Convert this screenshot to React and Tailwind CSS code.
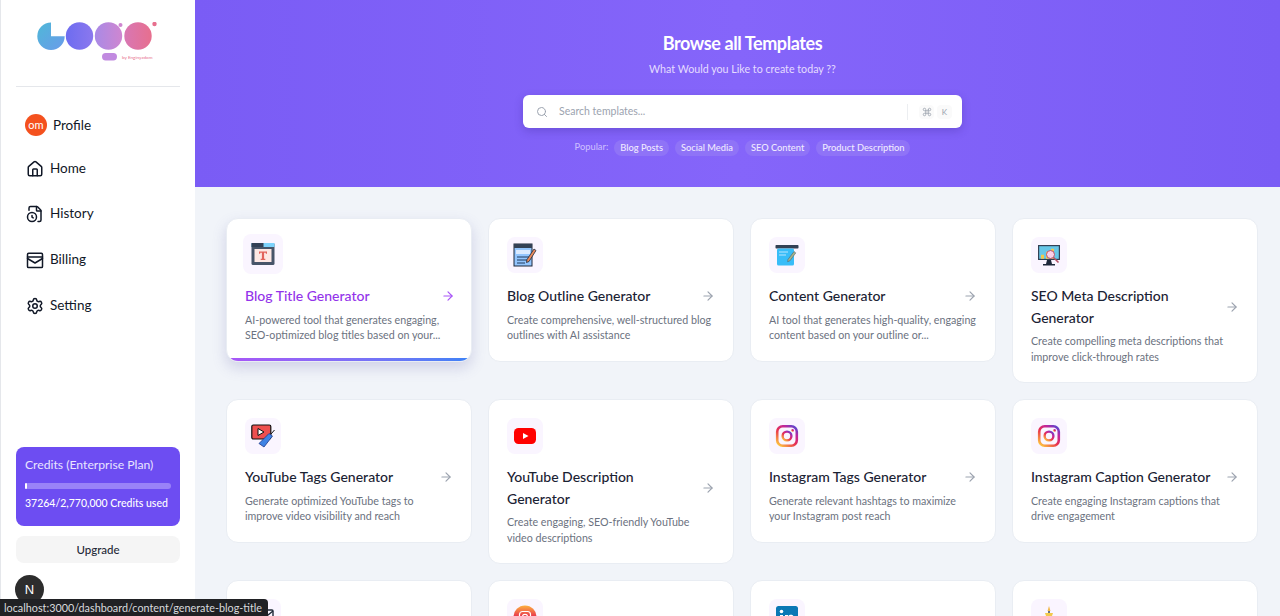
import { ArrowRight, Command, FileClock, House, Search, Settings } from "lucide-react";

const font = "font-['Lato','Liberation_Sans',sans-serif]";

function BlogTitleIcon() {
  return (
    <svg viewBox="0 0 24 24" className="w-6 h-6">
      <rect x="0.5" y="1" width="23" height="22" rx="1.5" fill="#475569" />
      <rect x="0.5" y="1" width="23" height="4" fill="#7dd3fc" />
      <rect x="0.5" y="1" width="12" height="4" fill="#334155" />
      <rect x="3.5" y="7" width="17" height="13" fill="#fde8e4" />
      <path d="M8 9.5h8v2.2h-1.2v-1h-1.7v6h1.2V18H9.7v-1.3h1.2v-6H9.2v1H8z" fill="#e2635b" />
    </svg>
  );
}

function BlogOutlineIcon() {
  return (
    <svg viewBox="0 0 24 24" className="w-6 h-6">
      <rect x="1" y="1" width="18" height="22" fill="#93c5fd" stroke="#1e293b" strokeWidth="1" />
      <rect x="1" y="1" width="18" height="4" fill="#334155" />
      <rect x="3" y="7" width="14" height="4" fill="#dbeafe" />
      <path d="M4 14h12M4 17h10M4 20h8" stroke="#1e3a5f" strokeWidth="1" />
      <path d="M21 6l2 1.5-7 11-2.5 1 .4-2.8z" fill="#ea8a5b" stroke="#1e293b" strokeWidth="0.8" />
    </svg>
  );
}

function ContentIcon() {
  return (
    <svg viewBox="0 0 24 24" className="w-6 h-6">
      <rect x="0.5" y="2" width="23" height="3.5" rx="0.8" fill="#334155" />
      <rect x="2" y="5.5" width="17" height="17" rx="1.5" fill="#38bdf8" />
      <path d="M4 9h9M4 12h7" stroke="#bae6fd" strokeWidth="1.2" />
      <path d="M19 8.5l1.8 1.4-6 8-2.2.8.4-2.3z" fill="#a3b18a" stroke="#475569" strokeWidth="0.5" />
    </svg>
  );
}

function SeoIcon() {
  return (
    <svg viewBox="0 0 24 24" className="w-6 h-6">
      <rect x="1" y="2" width="22" height="15" fill="#334155" />
      <rect x="2.2" y="3.2" width="19.6" height="12.6" fill="#67c7e8" />
      <path d="M4 15.8v-4h3v4zM9 15.8v-7h3v7zM14 15.8v-10h3v10z" fill="#f2c94c" />
      <path d="M10 17h4l1 4h3v1.5H6V21h3z" fill="#1e293b" />
      <circle cx="13.5" cy="11.5" r="4" fill="#fbcfe8" stroke="#b45368" strokeWidth="1" />
      <path d="M16.5 14.5l5 5" stroke="#b45368" strokeWidth="1.6" />
    </svg>
  );
}

function TagsIcon() {
  return (
    <svg viewBox="0 0 24 24" className="w-6 h-6">
      <rect x="0.8" y="1" width="19" height="14" rx="1.5" fill="#ee4f4f" stroke="#111" strokeWidth="1.2" />
      <path d="M7 4.5l6 3.5-6 3.5z" fill="#fff" stroke="#111" strokeWidth="1" />
      <path d="M18 9.5l3.5 2.5-8.5 11-5-3.5z" fill="#3f83e4" stroke="#1e3a8a" strokeWidth="0.8" />
      <path d="M20 10l3.5-4" stroke="#111" strokeWidth="1" />
    </svg>
  );
}

function YoutubeIcon() {
  return (
    <svg viewBox="0 0 24 24" className="w-6 h-6">
      <rect x="1" y="4" width="22" height="16" rx="4.5" fill="#f00" />
      <path d="M10 9l5.5 3-5.5 3z" fill="#fff" />
    </svg>
  );
}

function InstagramIcon({ id }) {
  return (
    <svg viewBox="0 0 24 24" className="w-6 h-6">
      <defs>
        <linearGradient id={id} x1="0.1" y1="1" x2="0.9" y2="0">
          <stop offset="0" stopColor="#fdc43f" />
          <stop offset="0.45" stopColor="#e8304f" />
          <stop offset="0.75" stopColor="#c0269c" />
          <stop offset="1" stopColor="#5a45cf" />
        </linearGradient>
      </defs>
      <rect x="2.2" y="2.2" width="19.6" height="19.6" rx="5.5" fill="none" stroke={`url(#${id})`} strokeWidth="2.6" />
      <circle cx="12" cy="12" r="4.4" fill="none" stroke={`url(#${id})`} strokeWidth="2.4" />
      <circle cx="17.6" cy="6.4" r="1.3" fill={`url(#${id})`} />
    </svg>
  );
}

function MailIcon() {
  return (
    <svg viewBox="0 0 24 24" className="w-6 h-6" fill="none" stroke="#1f2937" strokeWidth="1.4">
      <rect x="2" y="5" width="20" height="14" rx="1" />
      <path d="M2 6l10 8 10-8" />
    </svg>
  );
}

function InstaFilledIcon() {
  return (
    <svg viewBox="0 0 24 24" className="w-6 h-6">
      <defs>
        <linearGradient id="insta-fill" x1="0" y1="0" x2="0" y2="1">
          <stop offset="0" stopColor="#fdb13f" />
          <stop offset="0.5" stopColor="#e8304f" />
          <stop offset="1" stopColor="#b026b5" />
        </linearGradient>
      </defs>
      <circle cx="12" cy="12" r="11.5" fill="url(#insta-fill)" />
      <rect x="6.5" y="6.5" width="11" height="11" rx="3" fill="none" stroke="#fff" strokeWidth="1.2" />
      <circle cx="12" cy="12" r="2.6" fill="none" stroke="#fff" strokeWidth="1.2" />
    </svg>
  );
}

function LinkedinIcon() {
  return (
    <svg viewBox="0 0 24 24" className="w-6 h-6">
      <rect x="1" y="1" width="22" height="22" rx="2.5" fill="#0a78b5" />
      <path d="M5 10h3v9H5zM10 10h3v1.3c.6-.9 1.6-1.5 2.9-1.5 2.3 0 3.1 1.5 3.1 3.8V19h-3v-4.7c0-1.2-.4-2-1.4-2s-1.6.8-1.6 2V19h-3z" fill="#fff" />
      <circle cx="6.5" cy="6.5" r="1.8" fill="#fff" />
    </svg>
  );
}

function TrophyIcon() {
  return (
    <svg viewBox="0 0 24 24" className="w-6 h-6">
      <path d="M12 1l1.5 5h-3z" fill="#f2b84b" />
      <rect x="11" y="6" width="2" height="10" fill="#64748b" />
      <path d="M8 8h8l-1 3H9z" fill="#f2c94c" />
      <rect x="5" y="16" width="14" height="3" fill="#475569" />
      <rect x="3" y="19" width="18" height="3" fill="#94a3b8" />
    </svg>
  );
}

function BillingIcon() {
  return (
    <svg viewBox="0 0 24 24" className="w-[18px] h-[18px]" fill="none" stroke="#111827" strokeWidth="2" strokeLinejoin="round" strokeLinecap="round">
      <rect x="2" y="3" width="20" height="19" rx="1.5" />
      <path d="M2 8h20" />
      <path d="M2 10l10 6 10-6" />
    </svg>
  );
}

function Logo() {
  return (
    <svg viewBox="0 0 122 42" className="w-[122px] h-[42px]">
      <defs>
        <linearGradient id="logo-a" x1="0" y1="0" x2="1" y2="1">
          <stop offset="0" stopColor="#4fb8d8" />
          <stop offset="1" stopColor="#6a9bea" />
        </linearGradient>
        <linearGradient id="logo-b" x1="0" y1="0" x2="1" y2="0">
          <stop offset="0" stopColor="#6d6cf0" />
          <stop offset="1" stopColor="#8b78ee" />
        </linearGradient>
        <linearGradient id="logo-c" x1="0" y1="0" x2="1" y2="0">
          <stop offset="0" stopColor="#a98ae6" />
          <stop offset="1" stopColor="#cf86d0" />
        </linearGradient>
        <linearGradient id="logo-d" x1="0" y1="0" x2="1" y2="0">
          <stop offset="0" stopColor="#d877b4" />
          <stop offset="1" stopColor="#e76f8e" />
        </linearGradient>
      </defs>
      <path d="M14 0.5 A13.7 13.7 0 1 0 27.7 14.2 H14 Z" fill="url(#logo-a)" />
      <circle cx="42.5" cy="14" r="13.7" fill="url(#logo-b)" />
      <circle cx="71.5" cy="14" r="13.7" fill="url(#logo-c)" />
      <circle cx="83.5" cy="3" r="2" fill="#cf86d0" />
      <circle cx="101" cy="14" r="13.7" fill="url(#logo-d)" />
      <circle cx="117.5" cy="2" r="2.2" fill="#e76f8e" />
      <rect x="65" y="31" width="15" height="7.5" rx="3.7" fill="#c18ae0" />
      <text x="85" y="36.5" fontSize="4.6" fill="#e76f8e">by Enginyzdom</text>
    </svg>
  );
}

const NAV = [
  { label: "Home", icon: <House size={18} strokeWidth={2} color="#111827" />, cls: "h-[45px]" },
  { label: "History", icon: <FileClock size={18} strokeWidth={2} color="#111827" />, cls: "h-[45px]" },
  { label: "Billing", icon: <BillingIcon />, cls: "h-[47px]" },
  { label: "Setting", icon: <Settings size={18} strokeWidth={2} color="#111827" />, cls: "h-[45px]" },
];

const CARDS = [
  { title: "Blog Title Generator", desc: "AI-powered tool that generates engaging, SEO-optimized blog titles based on your...", icon: <BlogTitleIcon />, active: true },
  { title: "Blog Outline Generator", desc: "Create comprehensive, well-structured blog outlines with AI assistance", icon: <BlogOutlineIcon /> },
  { title: "Content Generator", desc: "AI tool that generates high-quality, engaging content based on your outline or...", icon: <ContentIcon /> },
  { title: "SEO Meta Description Generator", desc: "Create compelling meta descriptions that improve click-through rates", icon: <SeoIcon /> },
  { title: "YouTube Tags Generator", desc: "Generate optimized YouTube tags to improve video visibility and reach", icon: <TagsIcon /> },
  { title: "YouTube Description Generator", desc: "Create engaging, SEO-friendly YouTube video descriptions", icon: <YoutubeIcon /> },
  { title: "Instagram Tags Generator", desc: "Generate relevant hashtags to maximize your Instagram post reach", icon: <InstagramIcon id="insta-a" /> },
  { title: "Instagram Caption Generator", desc: "Create engaging Instagram captions that drive engagement", icon: <InstagramIcon id="insta-b" /> },
  { icon: <MailIcon /> },
  { icon: <InstaFilledIcon /> },
  { icon: <LinkedinIcon /> },
  { icon: <TrophyIcon /> },
];

function Card({ title, desc, icon, active }) {
  return (
    <div className={`relative self-start min-h-[143px] w-full overflow-hidden rounded-xl border border-[#e9edf3] bg-white p-[18px] ${active ? "shadow-[0_6px_14px_rgba(90,90,170,0.22)]" : ""}`}>
      <div className={`flex items-center justify-center bg-[#faf5ff] rounded-lg ${active ? "w-10 h-10 -ml-[2px] -mt-[3px] -mb-[1px]" : "w-9 h-9"}`}>
        {icon}
      </div>
      {title && (
        <>
          <div className="mt-3 flex items-center justify-between gap-2">
            <h3 className={`text-[14px] leading-[21.5px] font-medium ${active ? "text-[#9333ea]" : "text-[#1a2233]"}`}>{title}</h3>
            <ArrowRight size={14} className={`shrink-0 ${active ? "-mr-[2px] text-[#a855f7]" : "text-[#9ca3af]"}`} />
          </div>
          <p className="mt-[5px] text-[10.7px] leading-[15.5px] text-[#6b7280]">{desc}</p>
        </>
      )}
      {active && <div className="absolute left-0 right-0 bottom-0 h-[3px] bg-gradient-to-r from-[#a855f7] to-[#3b82f6]" />}
    </div>
  );
}

export default function App() {
  return (
    <div className={`relative flex h-[616px] w-[1280px] overflow-hidden bg-[#f1f4f9] ${font}`}>
      <aside className="flex w-[195px] shrink-0 flex-col border-l border-[#e5e7eb] bg-white pl-[15px] pr-[15px]">
        <div className="flex h-[87px] items-start justify-center border-b border-[#e5e7eb] pt-[22px]">
          <Logo />
        </div>
        <div className="mt-[26px] flex h-[24px] items-center gap-[6px] pl-[9px] text-[13.5px] text-[#111827]">
          <span className="flex h-[22px] w-[22px] items-center justify-center rounded-full bg-[#f4511e] text-[11px] text-white">om</span>
          Profile
        </div>
        <nav className="mt-[9px] flex flex-col">
          {NAV.map((n) => (
            <div key={n.label} className={`flex items-center gap-[6px] pl-[10px] text-[13.5px] text-[#111827] ${n.cls}`}>
              {n.icon}
              {n.label}
            </div>
          ))}
        </nav>
        <div className="mt-auto h-[79px] rounded-lg bg-[#6d4df2] px-[9px] pt-[10px] text-white">
          <p className="whitespace-nowrap text-[12.2px] leading-[16px] text-[#e9e4ff]">Credits (Enterprise Plan)</p>
          <div className="mt-[10px] h-[6px] rounded-full bg-[#9a82f8]">
            <div className="h-full w-[2px] rounded-full bg-white" />
          </div>
          <p className="mt-[6px] whitespace-nowrap text-[10.5px] leading-[16px] font-medium">37264/2,770,000 Credits used</p>
        </div>
        <button className="mb-[53px] mt-[10px] h-[27px] rounded-lg bg-[#f5f5f5] text-[11.5px] font-medium text-[#1f2937]">Upgrade</button>
      </aside>

      <main className="min-w-0 flex-1">
        <header className="flex h-[187px] flex-col items-center bg-gradient-to-r from-[#7a5cf5] via-[#8565fa] to-[#7a5cf5] pl-[10px] pt-[32px]">
          <h1 className="text-[18px] leading-[22px] font-bold tracking-[-0.4px] text-white">Browse all Templates</h1>
          <p className="mt-[7px] text-[10.7px] leading-[16px] text-[#e4dcff]">What Would you Like to create today ??</p>
          <div className="mt-[18px] flex h-[33px] w-[439px] items-center rounded-md bg-white pl-[13px] pr-[10px] shadow-[0_3px_8px_rgba(60,40,150,0.3)]">
            <Search size={12} className="text-[#9ca3af]" />
            <span className="ml-[11px] flex-1 text-[10.5px] text-[#9ca3af]">Search templates...</span>
            <div className="flex h-[16px] items-center gap-[3px] border-l border-[#eceef1] pl-[11px]">
              <span className="flex h-[14px] w-[15px] items-center justify-center rounded-sm bg-[#fafafa]">
                <Command size={10} className="text-[#9ca3af]" />
              </span>
              <span className="flex h-[14px] w-[15px] items-center justify-center rounded-sm bg-[#fafafa] text-[8px] text-[#9ca3af]">K</span>
            </div>
          </div>
          <div className="mt-[12px] flex items-center gap-[6px] text-[9.3px] leading-[12px] font-medium">
            <span className="-mt-[3px] text-[#cbbcff]">Popular:</span>
            {["Blog Posts", "Social Media", "SEO Content", "Product Description"].map((t) => (
              <span key={t} className="rounded-full bg-[#8f73f7] px-[6px] py-[2px] text-[#efeaff]">{t}</span>
            ))}
          </div>
        </header>
        <div className="grid grid-cols-[repeat(4,246px)] gap-4 pl-[31px] pt-[31px]">
          {CARDS.map((c, i) => (
            <Card key={i} {...c} />
          ))}
        </div>
      </main>

      <div className="absolute bottom-[12px] left-[15px] flex h-[29px] w-[29px] items-center justify-center rounded-full bg-[#2d2d2d] text-[13px] text-white font-['Liberation_Sans',sans-serif]">N</div>
      <div className="absolute bottom-0 left-0 h-[17px] rounded-tr bg-[#202124] pl-[4px] pr-[6px] text-[10.8px] leading-[17px] text-[#d8dadd]">localhost:3000/dashboard/content/generate-blog-title</div>
    </div>
  );
}
